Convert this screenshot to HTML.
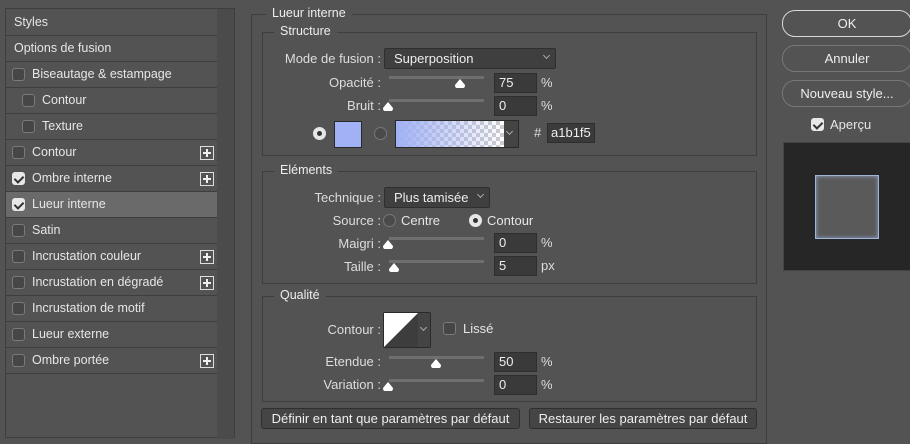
<!DOCTYPE html>
<html><head><meta charset="utf-8"><style>
*{box-sizing:border-box;margin:0;padding:0}
body{width:910px;height:434px;background:#535353;font-family:"Liberation Sans",sans-serif;font-size:12.5px;color:#e6e6e6;position:relative;overflow:hidden}
.a{position:absolute}
.row{position:absolute;left:6px;width:211px;height:26px;border-bottom:1px solid #3e3e3e;line-height:25px;font-size:12.5px}
.cb{position:absolute;width:13px;height:13px;border:1px solid #7a7a7a;border-radius:3px;background:#464646;top:6px}
.cb.on{background:#e8e8e8;border-color:#e8e8e8}
.cb.on:after{content:"";position:absolute;left:3px;top:1px;width:4px;height:7px;border:solid #333;border-width:0 2px 2px 0;transform:rotate(45deg)}
.plus{position:absolute;left:194px;top:6px;width:14px;height:14px;border:1px solid #ddd}
.plus:before{content:"";position:absolute;left:2px;top:5px;width:8px;height:2px;background:#eee}
.plus:after{content:"";position:absolute;left:5px;top:2px;width:2px;height:8px;background:#eee}
.fs{position:absolute;border:1px solid #3e3e3e}
.lg{position:absolute;top:-9px;left:11px;background:#535353;padding:0 6px;font-size:12.5px;color:#eee}
.lbl{position:absolute;text-align:right;font-size:13px;color:#ddd}
.trk{position:absolute;left:389px;width:95px;height:3px;background:#6f6f6f}
.th{position:absolute;width:12px;height:10px}
.inp{position:absolute;left:494px;width:43px;height:20px;background:#3a3a3a;border:1px solid #2e2e2e;padding-left:4px;line-height:18px;color:#eee;font-size:13px}
.unit{position:absolute;left:541px;color:#ddd;font-size:13px}
.dd{position:absolute;height:21px;background:#3f3f3f;border:1px solid #2f2f2f;border-radius:2px;line-height:19px;padding-left:9px;color:#eee;font-size:13px}
.dd i{position:absolute;right:6px;top:4px;width:5px;height:5px;border:solid #aaa;border-width:0 1px 1px 0;transform:rotate(45deg)}
.rad{position:absolute;width:13px;height:13px;border-radius:50%;border:1px solid #777;background:#4a4a4a}
.rad.on{background:#e6e6e6;border-color:#e6e6e6}
.rad.on:after{content:"";position:absolute;left:3px;top:3px;width:5px;height:5px;border-radius:50%;background:#333}
.btn{position:absolute;height:21px;border:1px solid #2f2f2f;border-radius:3px;background:#454545;text-align:center;line-height:19px;color:#eee;font-size:13px}
.pill{position:absolute;left:782px;width:130px;height:27px;border:1px solid #8a8a8a;border-radius:13px;text-align:center;line-height:25px;color:#eee;font-size:13px}
</style></head><body>
<div class="a" style="left:5px;top:8px;width:230px;height:430px;border:1px solid #3e3e3e;background:#535353"></div>
<div class="a" style="left:217px;top:9px;width:17px;height:430px;background:#4b4b4b"></div>
<div class="row" style="top:10px;padding-left:8px">Styles</div>
<div class="row" style="top:36px;padding-left:8px">Options de fusion</div>
<div class="row" style="top:62px"><span class="cb" style="left:6px"></span><span class="a" style="left:26px">Biseautage &amp; estampage</span></div>
<div class="row" style="top:88px"><span class="cb" style="left:16px"></span><span class="a" style="left:36px">Contour</span></div>
<div class="row" style="top:114px"><span class="cb" style="left:16px"></span><span class="a" style="left:36px">Texture</span></div>
<div class="row" style="top:140px"><span class="cb" style="left:6px"></span><span class="a" style="left:26px">Contour</span><span class="plus"></span></div>
<div class="row" style="top:166px"><span class="cb on" style="left:6px"></span><span class="a" style="left:26px">Ombre interne</span><span class="plus"></span></div>
<div class="row" style="top:192px;background:#6a6a6a"><span class="cb on" style="left:6px"></span><span class="a" style="left:26px">Lueur interne</span></div>
<div class="row" style="top:218px"><span class="cb" style="left:6px"></span><span class="a" style="left:26px">Satin</span></div>
<div class="row" style="top:244px"><span class="cb" style="left:6px"></span><span class="a" style="left:26px">Incrustation couleur</span><span class="plus"></span></div>
<div class="row" style="top:270px"><span class="cb" style="left:6px"></span><span class="a" style="left:26px">Incrustation en dégradé</span><span class="plus"></span></div>
<div class="row" style="top:296px"><span class="cb" style="left:6px"></span><span class="a" style="left:26px">Incrustation de motif</span></div>
<div class="row" style="top:322px"><span class="cb" style="left:6px"></span><span class="a" style="left:26px">Lueur externe</span></div>
<div class="row" style="top:348px"><span class="cb" style="left:6px"></span><span class="a" style="left:26px">Ombre portée</span><span class="plus"></span></div>

<div class="fs" style="left:251px;top:14px;width:516px;height:430px"><span class="lg" style="left:14px">Lueur interne</span></div>
<div class="fs" style="left:262px;top:32px;width:495px;height:124px"><span class="lg">Structure</span></div>
<div class="fs" style="left:262px;top:171px;width:495px;height:113px"><span class="lg">Eléments</span></div>
<div class="fs" style="left:262px;top:296px;width:495px;height:106px"><span class="lg">Qualité</span></div>

<div class="lbl" style="left:270px;width:111px;top:51px">Mode de fusion :</div>
<div class="dd" style="left:384px;top:48px;width:172px">Superposition<i></i></div>
<div class="lbl" style="left:270px;width:111px;top:75px">Opacité :</div>
<div class="trk" style="top:76px"></div>
<svg class="th" style="left:454px;top:79px" viewBox="0 0 12 10"><path d="M6 0 L11 6 Q11 9 9 9 L3 9 Q1 9 1 6Z" fill="#fff"/></svg>
<div class="inp" style="top:73px">75</div><div class="unit" style="top:75px">%</div>
<div class="lbl" style="left:270px;width:111px;top:98px">Bruit :</div>
<div class="trk" style="top:99px"></div>
<svg class="th" style="left:382px;top:102px" viewBox="0 0 12 10"><path d="M6 0 L11 6 Q11 9 9 9 L3 9 Q1 9 1 6Z" fill="#fff"/></svg>
<div class="inp" style="top:96px">0</div><div class="unit" style="top:98px">%</div>
<div class="rad on" style="left:313px;top:127px"></div>
<div class="a" style="left:334px;top:121px;width:28px;height:27px;background:#a1b1f5;border:1px solid #2a2a2a"></div>
<div class="rad" style="left:374px;top:127px"></div>
<div class="a" style="left:395px;top:120px;width:124px;height:28px;border:1px solid #2a2a2a;background:#444"></div>
<div class="a" style="left:396px;top:121px;width:108px;height:26px;background:linear-gradient(90deg,#a1b1f5,rgba(161,177,245,0)),repeating-conic-gradient(#ccc 0 25%,#fff 0 50%) 0 0/8px 8px"></div>
<div class="a" style="left:507px;top:129px;width:5px;height:5px;border:solid #aaa;border-width:0 1px 1px 0;transform:rotate(45deg)"></div>
<div class="a" style="left:534px;top:125px;color:#ddd;font-size:13px">#</div>
<div class="a" style="left:547px;top:123px;width:48px;height:20px;background:#3a3a3a;border:1px solid #2e2e2e;line-height:18px;padding-left:3px;color:#eee;font-size:13px">a1b1f5</div>

<div class="lbl" style="left:270px;width:111px;top:190px">Technique :</div>
<div class="dd" style="left:384px;top:187px;width:106px">Plus tamisée<i></i></div>
<div class="lbl" style="left:270px;width:111px;top:213px">Source :</div>
<div class="rad" style="left:383px;top:214px"></div><div class="a" style="left:401px;top:213px;font-size:13px">Centre</div>
<div class="rad on" style="left:469px;top:214px"></div><div class="a" style="left:487px;top:213px;font-size:13px">Contour</div>
<div class="lbl" style="left:270px;width:111px;top:236px">Maigri :</div>
<div class="trk" style="top:237px"></div>
<svg class="th" style="left:382px;top:240px" viewBox="0 0 12 10"><path d="M6 0 L11 6 Q11 9 9 9 L3 9 Q1 9 1 6Z" fill="#fff"/></svg>
<div class="inp" style="top:233px">0</div><div class="unit" style="top:235px">%</div>
<div class="lbl" style="left:270px;width:111px;top:259px">Taille :</div>
<div class="trk" style="top:260px"></div>
<svg class="th" style="left:388px;top:263px" viewBox="0 0 12 10"><path d="M6 0 L11 6 Q11 9 9 9 L3 9 Q1 9 1 6Z" fill="#fff"/></svg>
<div class="inp" style="top:256px">5</div><div class="unit" style="top:258px">px</div>

<div class="lbl" style="left:270px;width:111px;top:322px">Contour :</div>
<div class="a" style="left:383px;top:312px;width:48px;height:36px;border:1px solid #2a2a2a;border-radius:2px;background:#444"></div>
<svg class="a" style="left:384px;top:313px" width="34" height="34"><rect width="34" height="34" fill="#3d3d3d"/><path d="M0 0 H34 L0 34Z" fill="#fff"/></svg>
<div class="a" style="left:421px;top:325px;width:5px;height:5px;border:solid #aaa;border-width:0 1px 1px 0;transform:rotate(45deg)"></div>
<div class="cb" style="left:443px;top:322px"></div><div class="a" style="left:463px;top:321px;font-size:13px">Lissé</div>
<div class="lbl" style="left:270px;width:111px;top:354px">Etendue :</div>
<div class="trk" style="top:356px"></div>
<svg class="th" style="left:430px;top:359px" viewBox="0 0 12 10"><path d="M6 0 L11 6 Q11 9 9 9 L3 9 Q1 9 1 6Z" fill="#fff"/></svg>
<div class="inp" style="top:352px">50</div><div class="unit" style="top:354px">%</div>
<div class="lbl" style="left:270px;width:111px;top:377px">Variation :</div>
<div class="trk" style="top:379px"></div>
<svg class="th" style="left:382px;top:382px" viewBox="0 0 12 10"><path d="M6 0 L11 6 Q11 9 9 9 L3 9 Q1 9 1 6Z" fill="#fff"/></svg>
<div class="inp" style="top:375px">0</div><div class="unit" style="top:377px">%</div>

<div class="btn" style="left:261px;top:408px;width:259px">Définir en tant que paramètres par défaut</div>
<div class="btn" style="left:529px;top:408px;width:228px">Restaurer les paramètres par défaut</div>

<div class="pill" style="top:10px;border-color:#d8d8d8">OK</div>
<div class="pill" style="top:45px;border-color:#777">Annuler</div>
<div class="pill" style="top:80px;border-color:#777">Nouveau style...</div>
<div class="cb on" style="left:811px;top:118px"></div><div class="a" style="left:830px;top:117px;font-size:13px">Aperçu</div>
<div class="a" style="left:783px;top:142px;width:130px;height:129px;background:#262626;border:1px solid #444"></div>
<div class="a" style="left:815px;top:175px;width:64px;height:64px;background:#5a5a5a;border:1px solid #9fb4d8;box-shadow:inset 0 0 4px #8ea3c8"></div>
</body></html>
